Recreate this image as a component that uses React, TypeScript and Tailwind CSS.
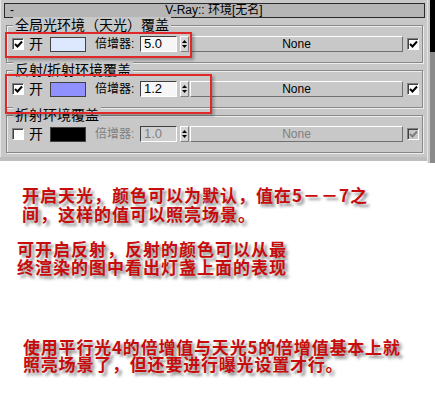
const ui = "font-['Liberation_Sans','Noto_Sans_CJK_SC',sans-serif]";
const cjkBold = "font-['Noto_Sans_CJK_SC',sans-serif] font-bold text-[#c80c0c] [text-shadow:3px_3px_3px_rgba(0,0,0,0.45)]";

function Check({ checked, disabled }: { checked: boolean; disabled?: boolean }) {
  return (
    <div
      className={`w-[12px] h-[12px] border border-t-[#808080] border-l-[#808080] border-r-white border-b-white shadow-[inset_1px_1px_0_#404040] flex items-center justify-center ${
        disabled ? 'bg-[#c8c8c8]' : 'bg-white'
      }`}
    >
      {checked && (
        <svg width="9" height="9" viewBox="0 0 9 9">
          <path d="M1 4 L3.5 6.5 L8 1.5" fill="none" stroke={disabled ? '#808080' : '#000'} strokeWidth="2" />
        </svg>
      )}
    </div>
  );
}

function Spinner() {
  return (
    <div className="ml-[3px] w-[9px] h-[16px] bg-[#d4d4d4] border border-t-white border-l-white border-r-[#808080] border-b-[#808080] flex flex-col items-center justify-center gap-[2px]">
      <svg width="5" height="3" viewBox="0 0 5 3"><path d="M0 3 L2.5 0 L5 3Z" fill="#000" /></svg>
      <svg width="5" height="3" viewBox="0 0 5 3"><path d="M0 0 L2.5 3 L5 0Z" fill="#000" /></svg>
    </div>
  );
}

function Row({ on, color, value, disabled }: { on: boolean; color: string; value: string; disabled?: boolean }) {
  const dim = disabled ? 'text-[#808080]' : 'text-black';
  return (
    <div className="flex items-center h-full pl-[5px]">
      <Check checked={on} />
      <span className="ml-[5px] w-[14px] text-[14px] leading-[16px] text-black">开</span>
      <div className="ml-[7px] w-[36px] h-[15px] border border-[#404040]" style={{ backgroundColor: color }} />
      <span className={`ml-[9px] w-[45px] text-[12px] leading-[14px] ${dim}`}>倍增器:</span>
      <div
        className={`w-[37px] h-[16px] border border-t-[#404040] border-l-[#404040] border-r-white border-b-white pl-[3px] text-[13px] leading-[14px] ${
          disabled ? 'bg-[#d0d0d0] text-[#808080]' : 'bg-[#f6f6f6] text-black'
        }`}
      >
        {value}
      </div>
      <Spinner />
      <div
        className={`ml-[1px] w-[213px] h-[16px] border border-t-white border-l-white border-r-[#707070] border-b-[#707070] flex items-center justify-center text-[12px] ${dim}`}
      >
        None
      </div>
      <div className="ml-[4px]">
        <Check checked disabled={disabled} />
      </div>
    </div>
  );
}

function Group({ label, children }: { label: string; children: React.ReactNode }) {
  return (
    <div className="relative mt-[7px] ml-[4px] w-[417px] h-[38px] border border-[#888888] shadow-[inset_1px_1px_0_#ececec,1px_1px_0_#ececec]">
      <span className="absolute left-[6px] -top-[9px] px-[2px] bg-[#c8c8c8] text-[14px] leading-[16px] text-black">
        {label}
      </span>
      {children}
    </div>
  );
}

export default function App() {
  return (
    <div className={`relative w-[435px] h-[420px] bg-white overflow-hidden ${ui}`}>
      <div className="flex h-[161px]">
        <div className="w-[427px] h-full bg-[#c8c8c8] pl-[2px] pt-[3px] border-b-[4px] border-[#bdbdbd] shadow-[inset_1px_0_0_#e6e6e6]">
          <div className="ml-[2px] w-[421px] h-[15px] bg-[#b6b6b6] border border-[#2a2a2a] flex items-center text-[12px] leading-[13px] text-black">
            <span className="pl-[5px]">-</span>
            <span className="flex-1 text-center pr-[10px]">V-Ray:: 环境[无名]</span>
          </div>
          <Group label="全局光环境（天光）覆盖">
            <Row on color="#dde8ff" value="5.0" />
          </Group>
          <Group label="反射/折射环境覆盖">
            <Row on color="#9090ff" value="1.2" />
          </Group>
          <Group label="折射环境覆盖">
            <Row on={false} color="#000000" value="1.0" disabled />
          </Group>
        </div>
        <div className="w-[8px] h-[163px] bg-[#c8c8c8] border-l border-[#e4e4e4] flex justify-end">
          <div className="w-[5px] flex flex-col">
            <div className="h-[52px] bg-black" />
            <div className="flex-1 bg-[#8a8a8a]" />
          </div>
        </div>
      </div>

      <div className="flex flex-col">
        <p className={`mt-[24px] ml-[22px] text-[17px] leading-[19px] tracking-[1px] ${cjkBold}`}>
          开启天光，颜色可以为默认，值在5－－7之
          <br />
          间，这样的值可以照亮场景。
        </p>
        <p className={`mt-[17px] ml-[17px] text-[17px] leading-[18px] tracking-[1px] ${cjkBold}`}>
          可开启反射，反射的颜色可以从最
          <br />
          终渲染的图中看出灯盏上面的表现
        </p>
        <p className={`mt-[62px] ml-[23px] text-[17px] leading-[17px] tracking-[0.8px] ${cjkBold}`}>
          使用平行光4的倍增值与天光5的倍增值基本上就
          <br />
          照亮场景了，但还要进行曝光设置才行。
        </p>
      </div>

      <div className="absolute left-[5px] top-[32px] w-[187px] h-[26px] border-2 border-[#e02828] shadow-[2px_2px_3px_rgba(0,0,0,0.3)]" />
      <div className="absolute left-[5px] top-[74px] w-[207px] h-[40px] border-2 border-[#e02828] shadow-[2px_2px_3px_rgba(0,0,0,0.3)]" />
    </div>
  );
}
